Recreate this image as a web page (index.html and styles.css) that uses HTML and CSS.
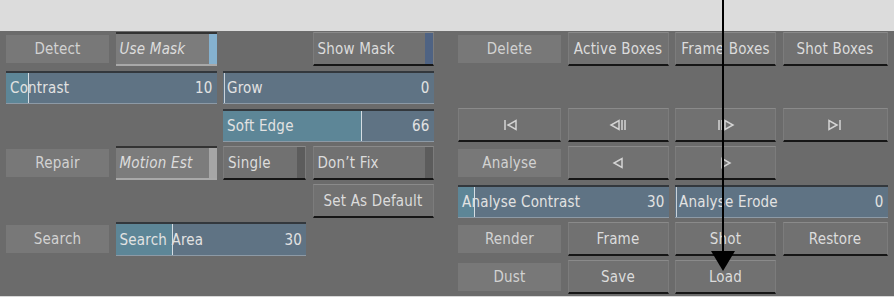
FILE: index.html
```html
<!DOCTYPE html>
<html lang="en">
<head>
    <meta charset="UTF-8">
    <title>Dust Removal</title>
    <link rel="stylesheet" href="styles.css">
</head>
<body>
<div class="page">
    <div class="top-band"></div>

    <div class="panel">
        <!-- left controls -->
        <div class="grid left">
            <div class="btn flat">Detect</div>
            <div class="btn pressed strip-blue-light"><span class="ital">Use Mask</span></div>
            <div class="blank"></div>
            <div class="btn raised strip-blue text-left">Show Mask</div>

            <div class="slider span2" style="--p: 22px"><span>Contrast</span><span>10</span></div>
            <div class="slider span2 mark" style="--p: 0px"><span>Grow</span><span>0</span></div>

            <div class="blank span2"></div>
            <div class="slider span2" style="--p: 138px"><span>Soft Edge</span><span>66</span></div>

            <div class="btn flat">Repair</div>
            <div class="btn pressed strip-grey"><span class="ital">Motion Est</span></div>
            <div class="btn raised strip-dark text-left">Single</div>
            <div class="btn raised strip-dark text-left">Don’t Fix</div>

            <div class="blank span3"></div>
            <div class="btn raised">Set As Default</div>

            <div class="btn flat">Search</div>
            <div class="slider span2 tall" style="--p: 56px"><span>Search Area</span><span>30</span></div>
            <div class="blank"></div>
        </div>

        <!-- right controls -->
        <div class="grid right">
            <div class="btn flat">Delete</div>
            <div class="btn raised">Active Boxes</div>
            <div class="btn raised">Frame Boxes</div>
            <div class="btn raised">Shot Boxes</div>

            <div class="blank span4"></div>

            <div class="btn raised">
                <svg class="ico" width="16" height="12" viewBox="0 0 16 12"><path d="M3 1v10M14 1.5v9L6 6z"/></svg>
            </div>
            <div class="btn raised">
                <svg class="ico" width="18" height="12" viewBox="0 0 18 12"><path d="M10 1.5v9L2 6zM13 1v10M16 1v10"/></svg>
            </div>
            <div class="btn raised">
                <svg class="ico" width="18" height="12" viewBox="0 0 18 12"><path d="M2 1v10M5 1v10M8 1.5v9L16 6z"/></svg>
            </div>
            <div class="btn raised">
                <svg class="ico" width="16" height="12" viewBox="0 0 16 12"><path d="M2 1.5v9L10 6zM13 1v10"/></svg>
            </div>

            <div class="btn flat">Analyse</div>
            <div class="btn raised">
                <svg class="ico" width="12" height="12" viewBox="0 0 12 12"><path d="M10 1.5v9L2 6z"/></svg>
            </div>
            <div class="btn raised">
                <svg class="ico" width="12" height="12" viewBox="0 0 12 12"><path d="M2 1.5v9L10 6z"/></svg>
            </div>
            <div class="blank"></div>

            <div class="slider span2" style="--p: 16px"><span>Analyse Contrast</span><span>30</span></div>
            <div class="slider span2 mark" style="--p: 0px"><span>Analyse Erode</span><span>0</span></div>

            <div class="btn flat">Render</div>
            <div class="btn raised">Frame</div>
            <div class="btn raised">Shot</div>
            <div class="btn raised">Restore</div>

            <div class="btn flat">Dust</div>
            <div class="btn raised">Save</div>
            <div class="btn raised">Load</div>
            <div class="blank"></div>
        </div>
    </div>

    <div class="bottom-band"></div>

    <!-- callout arrow -->
    <div class="pointer">
        <div class="shaft"></div>
        <div class="head"></div>
    </div>
</div>
</body>
</html>
```

FILE: styles.css
```css
body {
    margin: 0;
    background: #6b6b6b;
    font-family: "DejaVu Sans Condensed", "DejaVu Sans", sans-serif;
    font-size: 15px;
    color: #dcdcdc;
}

.page {
    position: relative;
    width: 894px;
    height: 297px;
    overflow: hidden;
}

.top-band {
    height: 31px;
    background: #dcdcdc;
}

.bottom-band {
    height: 1px;
    background: #d8d8d8;
}

.panel {
    height: 265px;
    display: flex;
    gap: 24.5px;
    padding: 1px 0 0 6px;
    box-sizing: border-box;
    background: #6b6b6b;
}

.grid {
    display: grid;
    grid-template-rows: repeat(7, 34px);
    column-gap: 6.5px;
    row-gap: 4px;
}

.left {
    grid-template-columns: 103px 101px 83px 121px;
}

.right {
    grid-template-columns: 103px 101px 101px 105px;
}

.span2 { grid-column: span 2; }
.span3 { grid-column: span 3; }
.span4 { grid-column: span 4; }

/* buttons */
.btn {
    display: flex;
    align-items: center;
    justify-content: center;
    box-sizing: border-box;
    white-space: nowrap;
    letter-spacing: 0.2px;
}

.flat {
    margin: 3px 0;
    background: #787878;
    color: #d2d2d2;
}

.raised {
    background: #717171;
    border-top: 1px solid #8a8a8a;
    border-left: 1px solid #7c7c7c;
    border-right: 1px solid #7c7c7c;
    border-bottom: 2px solid #161616;
}

.pressed {
    background: #7c7c7c;
    border-top: 2px solid #333;
    border-bottom: 2px solid #a9a9a9;
    justify-content: flex-start;
    padding-left: 4px;
}

.text-left {
    justify-content: flex-start;
    padding-left: 4px;
}

.ital {
    font-style: italic;
}

/* the small state strip at the right edge of some buttons */
.strip-blue-light { box-shadow: inset -8px 0 0 #85b1cf; }
.strip-grey { box-shadow: inset -8px 0 0 #a6a6a6; }
.strip-blue { box-shadow: inset -8px 0 0 #4f6383; }
.strip-dark { box-shadow: inset -8px 0 0 #5c5c5c; }

/* sliders */
.slider {
    margin: 1px 0 0;
    display: flex;
    align-items: center;
    justify-content: space-between;
    padding: 0 4px;
    box-sizing: border-box;
    border-top: 2px solid #33383d;
    border-bottom: 1px solid #8d9aa6;
    background: linear-gradient(to right,
        #5d8697 0, #5d8697 var(--p),
        #d5dde3 var(--p), #d5dde3 calc(var(--p) + 1px),
        #5f7384 calc(var(--p) + 1px));
    color: #e2e2e2;
    letter-spacing: 0.2px;
}

.slider.mark {
    background: linear-gradient(to right,
        #5f7384 0, #5f7384 1px,
        #c9d1d8 1px, #c9d1d8 2px,
        #5f7384 2px);
}

.slider.tall {
    margin: 0;
}

.ico {
    fill: none;
    stroke: #d4d4d4;
    stroke-width: 1.5;
}

/* black callout arrow laid over the panel */
.pointer {
    position: absolute;
    left: 711px;
    top: 0;
    width: 24px;
    display: flex;
    flex-direction: column;
    align-items: center;
}

.shaft {
    width: 2px;
    height: 251px;
    background: #000;
}

.head {
    width: 0;
    height: 0;
    border-left: 12px solid transparent;
    border-right: 12px solid transparent;
    border-top: 20px solid #000;
}
```
